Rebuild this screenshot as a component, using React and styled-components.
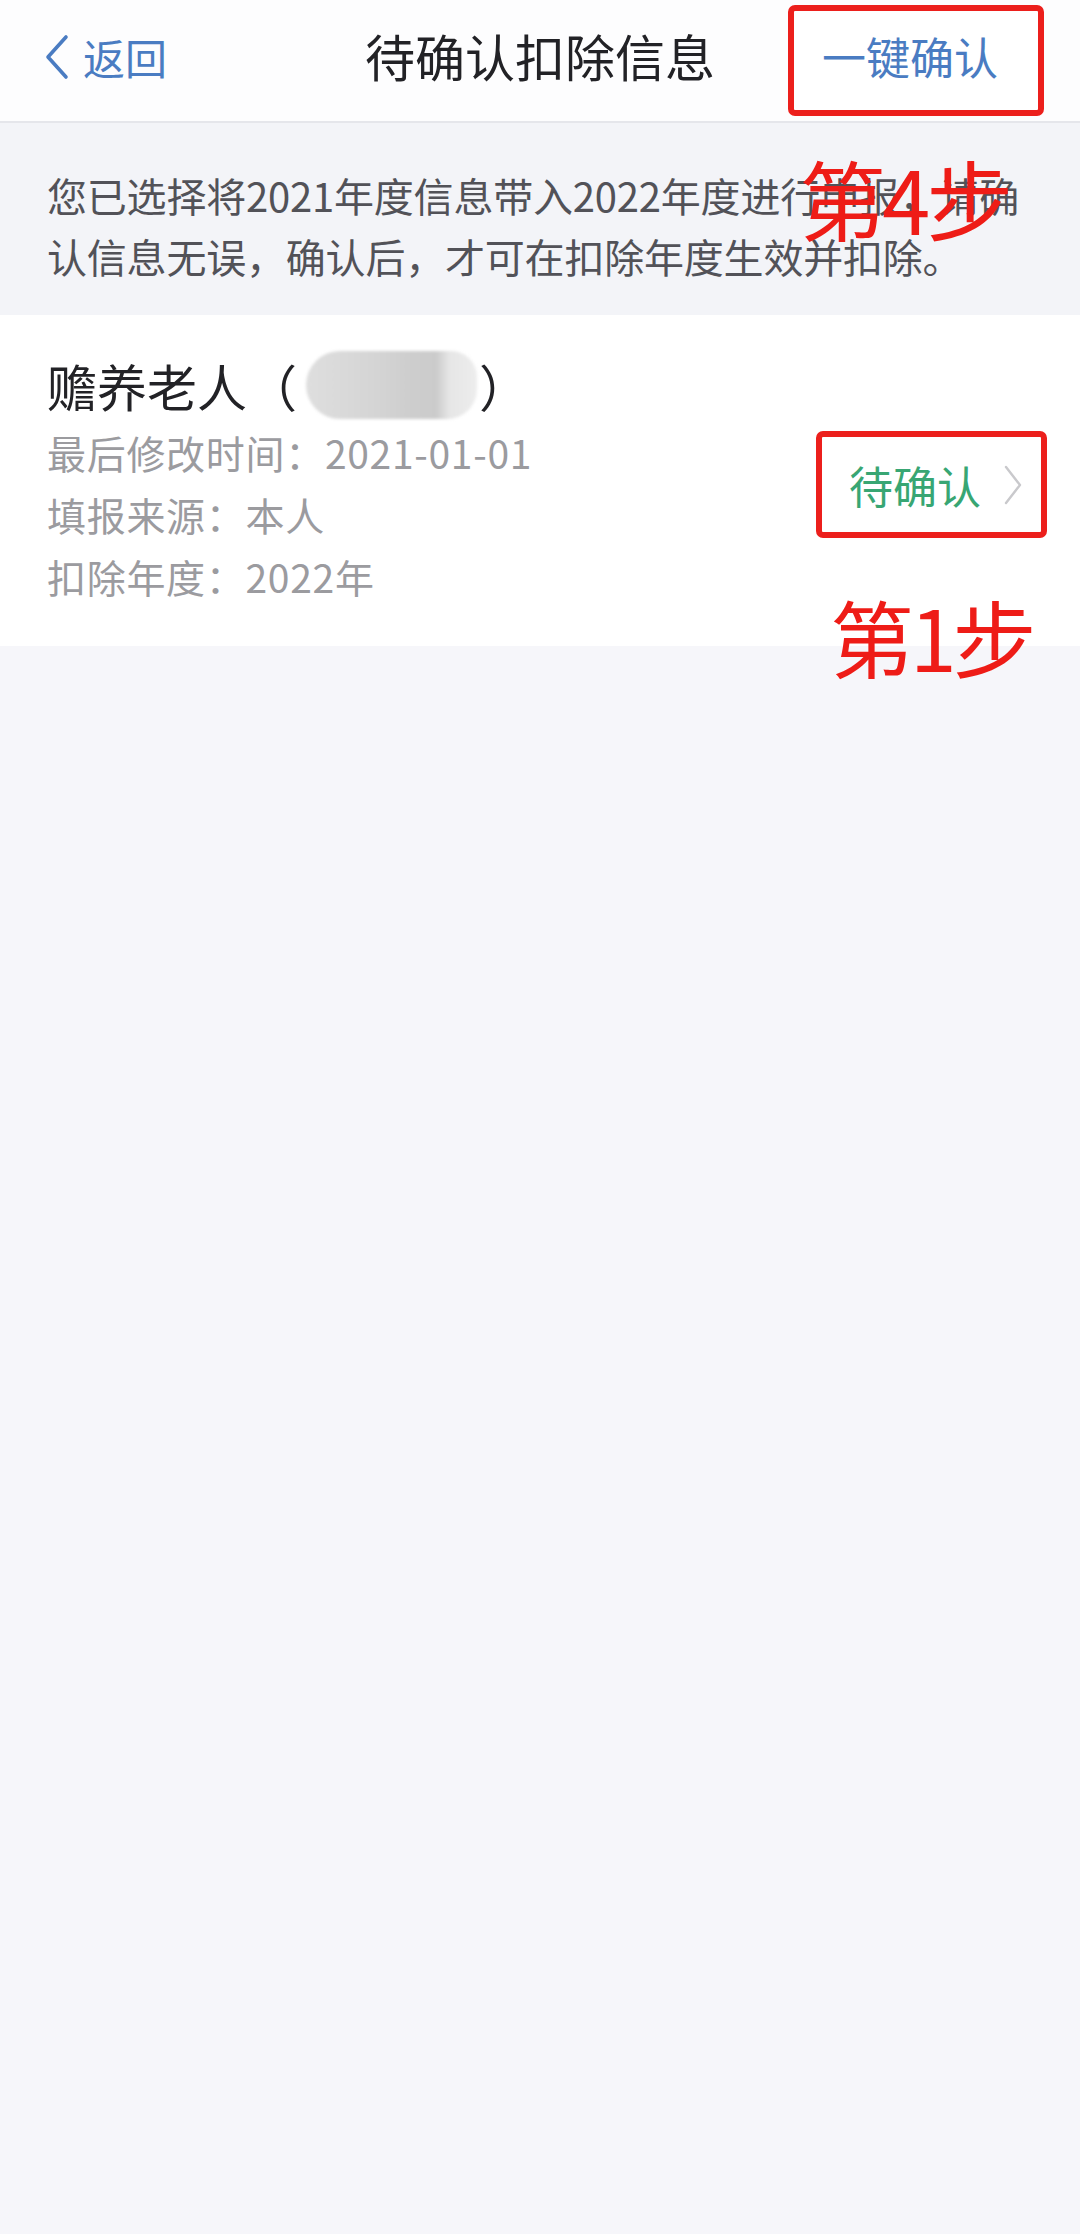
import React from 'react'
import styled, { createGlobalStyle } from 'styled-components'

const GlobalStyle = createGlobalStyle`
  html, body {
    margin: 0;
    padding: 0;
    background: #f6f6fa;
  }

  body {
    font-family: 'Noto Sans CJK SC', 'Noto Sans', sans-serif;
    -webkit-font-smoothing: antialiased;
  }
`

const Page = styled.div`
  width: 1080px;
  min-height: 2234px;
  background: #f6f6fa;
`

const Header = styled.header`
  height: 121px;
  background: #fdfdfe;
  border-bottom: 2px solid #e5e6eb;
  display: grid;
  grid-template-columns: 1fr auto 1fr;
  align-items: center;
`

const BackButton = styled.div`
  display: flex;
  align-items: center;
  gap: 14px;
  padding-left: 45px;
  padding-bottom: 8px;
  color: #4a7cc2;
  font-size: 42px;
  line-height: 1;
`

const Title = styled.h1`
  margin: 0;
  padding-bottom: 11px;
  font-size: 50px;
  font-weight: 400;
  color: #222226;
  line-height: 1;
`

const HeaderRight = styled.div`
  display: flex;
  justify-content: flex-end;
  padding-right: 36px;
`

// red annotation frame drawn on top of the screenshot
const Marked = styled.div`
  box-sizing: border-box;
  display: flex;
  align-items: center;
  border: 6px solid #ec1f1c;
  border-radius: 7px;
  background: #fff;
`

const ConfirmAll = styled(Marked)`
  width: 256px;
  height: 111px;
  justify-content: center;
  padding: 0 12px 9px 0;
  color: #4a7cc2;
  font-size: 44px;
  line-height: 1;
`

const Notice = styled.div`
  position: relative;
  padding: 42px 47px 28px;
  background: #f3f4f8;
  color: #525258;
  font-size: 40px;
  line-height: 61px;
  letter-spacing: -0.2px;
  white-space: nowrap;
`

const Step = styled.div`
  position: absolute;
  left: ${p => p.x}px;
  top: ${p => p.y}px;
  color: #ee1c17;
  font-size: ${p => p.size || 84}px;
  line-height: 1;
  letter-spacing: -4px;
  white-space: nowrap;
  pointer-events: none;
`

const Card = styled.section`
  position: relative;
  display: flex;
  align-items: center;
  justify-content: space-between;
  padding: 37px 33px 39px 47px;
  background: #fff;
`

const Info = styled.div`
  display: flex;
  flex-direction: column;
`

const ItemTitle = styled.div`
  display: flex;
  align-items: center;
  height: 66px;
  margin-bottom: 3px;
  color: #222226;
  font-size: 50px;
`

const Masked = styled.span`
  display: inline-block;
  width: 171px;
  height: 68px;
  margin: 0 2px 0 9px;
  border-radius: 34px 26px 30px 34px;
  background: linear-gradient(
    90deg,
    #dedede 0%,
    #d9d9d9 22%,
    #d3d3d3 45%,
    #cdcdcd 62%,
    #cbcbcb 76%,
    #e6e6e6 84%,
    #ededed 100%
  );
  filter: blur(1.5px);
`

const Detail = styled.div`
  color: #9b9b9f;
  font-size: 39px;
  letter-spacing: 0.7px;
  line-height: 62px;
`

const Status = styled(Marked)`
  width: 231px;
  height: 107px;
  margin-top: 10px;
  padding: 0 18px 0 27px;
  justify-content: space-between;
  color: #38a673;
  font-size: 44px;
  line-height: 1;
`

const Chevron = ({ color, width, height, stroke, points }) => (
  <svg width={width} height={height} viewBox={`0 0 ${width} ${height}`} fill="none">
    <polyline
      points={points}
      stroke={color}
      strokeWidth={stroke}
      strokeLinecap="round"
      strokeLinejoin="round"
    />
  </svg>
)

export default function App() {
  return (
    <Page>
      <GlobalStyle />
      <Header>
        <BackButton>
          <Chevron color="#4a7cc2" width={24} height={46} stroke={3.6} points="21,3 3,23 21,43" />
          返回
        </BackButton>
        <Title>待确认扣除信息</Title>
        <HeaderRight>
          <ConfirmAll>一键确认</ConfirmAll>
        </HeaderRight>
      </Header>

      <Notice>
        您已选择将2021年度信息带入2022年度进行申报，请确
        <br />
        认信息无误，确认后，才可在扣除年度生效并扣除。
        <Step x={799} y={31} size={87}>第4步</Step>
      </Notice>

      <Card>
        <Info>
          <ItemTitle>
            赡养老人（<Masked />）
          </ItemTitle>
          <Detail>最后修改时间：2021-01-01</Detail>
          <Detail>填报来源：本人</Detail>
          <Detail>扣除年度：2022年</Detail>
        </Info>
        <Status>
          待确认
          <Chevron color="#c9c9cc" width={20} height={42} stroke={2.4} points="3,3 17,21 3,39" />
        </Status>
        <Step x={830} y={279}>第1步</Step>
      </Card>
    </Page>
  )
}
